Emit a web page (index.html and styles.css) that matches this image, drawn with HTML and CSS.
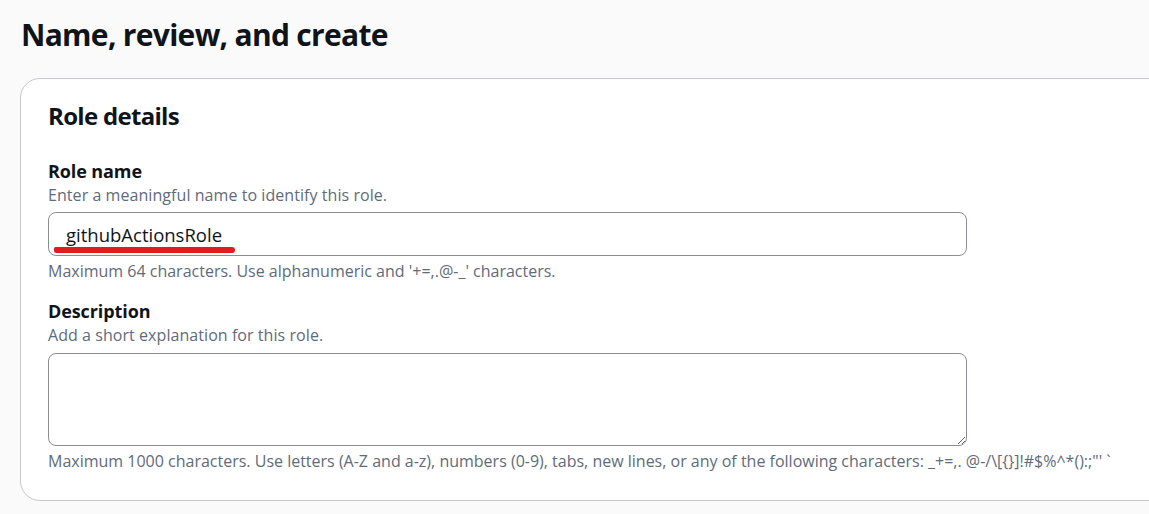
FILE: index.html
```html
<!DOCTYPE html>
<html lang="en">
<head>
<meta charset="utf-8">
<title>Name, review, and create</title>
<link rel="stylesheet" href="styles.css">
</head>
<body>
<main class="page">
  <h1 class="page-title">Name, review, and create</h1>
  <section class="card">
    <h2 class="card-title">Role details</h2>
    <div class="field">
      <label class="field-label" for="role-name">Role name</label>
      <div class="field-desc">Enter a meaningful name to identify this role.</div>
      <div class="input-wrap">
        <input id="role-name" class="input" type="text" value="githubActionsRole">
        <span class="mark"></span>
      </div>
      <div class="field-hint">Maximum 64 characters. Use alphanumeric and '+=,.@-_' characters.</div>
    </div>
    <div class="field field-second">
      <label class="field-label" for="role-desc">Description</label>
      <div class="field-desc">Add a short explanation for this role.</div>
      <textarea id="role-desc" class="textarea"></textarea>
      <div class="field-hint">Maximum 1000 characters. Use letters (A-Z and a-z), numbers (0-9), tabs, new lines, or any of the following characters: _+=,. @-/\[{}]!#$%^*():;"' `</div>
    </div>
  </section>
</main>
</body>
</html>
```

FILE: styles.css
```css
html, body {
  margin: 0;
  padding: 0;
  background: #fafafa;
  overflow: hidden;
}

.page {
  font-family: "Open Sans", "Noto Sans", sans-serif;
  color: #0f141a;
  padding: 0 0 0 20px;
  width: 1200px;
}

.page-title {
  margin: 0;
  padding: 15px 0 0 1px;
  font-size: 30px;
  line-height: 40px;
  font-weight: 700;
  letter-spacing: -0.7px;
}

.card {
  margin-top: 23px;
  box-sizing: border-box;
  width: 1180px;
  height: 423px;
  background: #ffffff;
  border: 1px solid #c6c6cd;
  border-radius: 20px;
  padding: 21px 27px 0;
}

.card-title {
  margin: 0;
  font-size: 24px;
  line-height: 32px;
  font-weight: 700;
  letter-spacing: -0.7px;
}

.field {
  width: 919px;
  margin-top: 27px;
}

.field-second {
  margin-top: 16px;
}

.field-label {
  display: block;
  font-size: 18px;
  line-height: 24px;
  font-weight: 700;
  letter-spacing: -0.1px;
}

.field-desc,
.field-hint {
  font-size: 16px;
  line-height: 24px;
  letter-spacing: 0.06px;
  color: #5f6b7a;
}

.field-hint {
  margin-top: 3px;
  white-space: nowrap;
  letter-spacing: 0;
}

.input-wrap {
  position: relative;
  margin-top: 5px;
}

.input {
  display: block;
  box-sizing: border-box;
  width: 100%;
  height: 44px;
  margin: 0;
  padding: 0 17px;
  border: 1px solid #8c8c94;
  border-radius: 8px;
  background: #ffffff;
  font-family: inherit;
  font-size: 18.5px;
  color: #0f141a;
  outline: none;
}

.mark {
  position: absolute;
  left: 6px;
  top: 35px;
  width: 181px;
  height: 6px;
  border-radius: 2px 4px 4px 3px;
  background: #e21c1c;
}

.textarea {
  display: block;
  box-sizing: border-box;
  width: 100%;
  height: 93px;
  margin: 6px 0 0;
  padding: 8px 17px;
  border: 1px solid #8c8c94;
  border-radius: 8px;
  background: #ffffff;
  font-family: inherit;
  font-size: 18px;
  resize: vertical;
  outline: none;
}
```
